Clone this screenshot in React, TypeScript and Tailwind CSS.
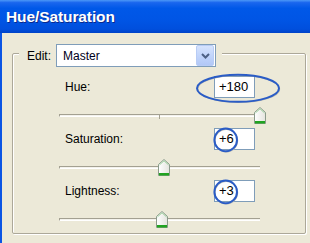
import React from "react";

const Thumb = ({ left }: { left: number }) => (
  <svg
    className="absolute top-[9px]"
    style={{ left }}
    width="12"
    height="17"
    viewBox="0 0 12 17"
  >
    <defs>
      <linearGradient id="tg" x1="0" y1="0" x2="1" y2="0">
        <stop offset="0" stopColor="#FFFFFF" />
        <stop offset="1" stopColor="#E4E4DE" />
      </linearGradient>
    </defs>
    <path
      d="M0.5 5.5 L6 0.5 L11.5 5.5 L11.5 16.5 L0.5 16.5 Z"
      fill="url(#tg)"
      stroke="#8A9A8A"
    />
    <path d="M1.5 5.9 L6 1.8 L10.5 5.9" fill="none" stroke="#9ED39E" strokeWidth="1" />
    <rect x="1" y="14" width="10" height="2.5" fill="#21A321" />
  </svg>
);

const Slider = ({ left, tick }: { left: number; tick?: boolean }) => (
  <div className="relative h-[30px]">
    <div className="absolute left-0 right-0 top-[16px] h-[3px] border-t border-l border-[#A3A091] border-b border-b-white bg-[#F3F2EC]" />
    {tick && <div className="absolute left-[100px] top-[16px] w-px h-[5px] bg-[#A3A091]" />}
    <Thumb left={left} />
  </div>
);

const Circle = () => (
  <svg className="absolute left-[-2px] top-[-2px]" width="26" height="26" viewBox="0 0 26 26">
    <circle cx="13.3" cy="13.6" r="11.3" fill="none" stroke="#B8B8B0" strokeWidth="1.2" />
    <circle cx="12.7" cy="12.9" r="11.3" fill="none" stroke="#2A5CC6" strokeWidth="2" />
  </svg>
);

const Row = ({
  label,
  value,
  mark,
}: {
  label: string;
  value: string;
  mark: "ellipse" | "circle";
}) => (
  <div className="h-[22px] flex items-center justify-between">
    <span className="pl-[6px] text-[12px] text-black">{label}</span>
    <div className="relative mr-[5px] w-[41px] h-[22px] border border-[#7F9DB9] bg-white flex items-center pl-[4px] text-[13px] text-black">
      {value}
      {mark === "ellipse" ? (
        <svg className="absolute left-[-20px] top-[-4px]" width="86" height="31" viewBox="0 0 86 31">
          <ellipse cx="43.6" cy="16" rx="41" ry="13.5" fill="none" stroke="#B8B8B0" strokeWidth="1.2" />
          <ellipse cx="43" cy="15.3" rx="41" ry="13.5" fill="none" stroke="#2A5CC6" strokeWidth="2" />
        </svg>
      ) : (
        <Circle />
      )}
    </div>
  </div>
);

export default function App() {
  return (
    <div
      className="w-[310px] h-[243px] flex flex-col overflow-hidden"
      style={{ fontFamily: '"Liberation Sans", Arial, sans-serif' }}
    >
      <div className="h-[33px] flex items-center pl-[6px] pt-[1px] bg-[linear-gradient(180deg,#4C98F7_0%,#1A66EE_8%,#0058E8_25%,#0055E5_60%,#004FDD_88%,#0043C8_100%)]">
        <span className="text-white font-bold text-[15.5px] tracking-[-0.1px] [text-shadow:1px_1px_0_#0B2A8C]">
          Hue/Saturation
        </span>
      </div>
      <div className="flex-1 flex bg-[#ECE9D8]">
        <div className="w-[2px] bg-[#0B55E4]" />
        <div className="flex-1 pl-[10px] pt-[20px]">
          <div className="w-[294px] h-[181px] border border-[#ACA899] rounded-[2px] shadow-[1px_1px_0_#FFFFFF,inset_1px_1px_0_#FFFFFF] flex flex-col">
            <div className="-mt-[10px] ml-[6px] self-start flex items-center bg-[#ECE9D8] pl-[8px] pr-[6px] h-[23px]">
              <span className="text-[12px] text-black w-[29px]">Edit:</span>
              <div className="w-[160px] h-[23px] border border-[#7F9DB9] bg-white flex items-center">
                <span className="flex-1 pl-[6px] text-[12px] text-[#000020]">Master</span>
                <div className="w-[18px] h-[21px] mr-[1px] rounded-[2px] border border-[#B8CCF5] bg-[linear-gradient(180deg,#D6E3FD_0%,#C2D5FB_50%,#B2C8F6_100%)] flex items-center justify-center">
                  <svg width="9" height="6" viewBox="0 0 9 6">
                    <path d="M1 1 L4.5 4.5 L8 1" fill="none" stroke="#4D6185" strokeWidth="2" />
                  </svg>
                </div>
              </div>
            </div>
            <div className="ml-[46px] w-[201px] mt-[9px] flex flex-col">
              <Row label="Hue:" value="+180" mark="ellipse" />
              <Slider left={195} tick />
              <Row label="Saturation:" value="+6" mark="circle" />
              <Slider left={99} />
              <Row label="Lightness:" value="+3" mark="circle" />
              <Slider left={97} />
            </div>
          </div>
        </div>
      </div>
    </div>
  );
}
